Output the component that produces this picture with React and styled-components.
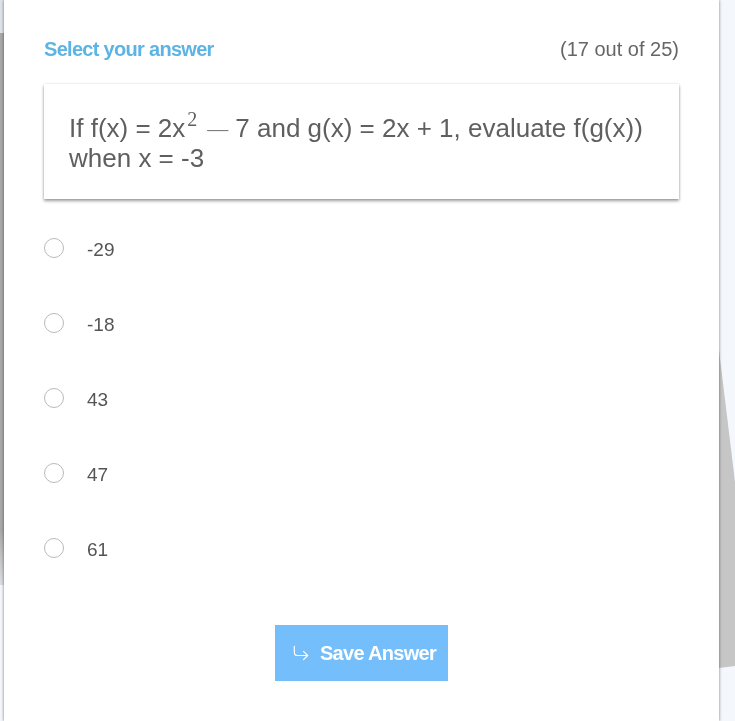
import styled, { createGlobalStyle } from "styled-components";
import { CornerDownRight } from "lucide-react";

const GlobalStyle = createGlobalStyle`
  html, body {
    margin: 0;
    padding: 0;
    background: #f4f7fb;
  }
  body {
    font-family: "Liberation Sans", Arial, sans-serif;
  }
`;

const Backdrop = styled.svg`
  position: fixed;
  top: 0;
  left: 0;
  width: 735px;
  height: 721px;
  z-index: 0;
`;

const Page = styled.div`
  position: relative;
  z-index: 1;
  box-sizing: border-box;
  margin-left: 4px;
  width: 715px;
  min-height: 100vh;
  padding: 38px 40px 40px;
  background: #fff;
  box-shadow: 0 0 3px rgba(0, 0, 0, 0.5);
`;

const Header = styled.div`
  display: flex;
  justify-content: space-between;
  align-items: baseline;
  line-height: 22px;
`;

const Title = styled.h2`
  margin: 0;
  font-size: 20px;
  font-weight: bold;
  letter-spacing: -0.7px;
  color: #5cb4e4;
`;

const Counter = styled.span`
  font-size: 20px;
  color: #666;
`;

const QuestionCard = styled.div`
  margin-top: 24px;
  padding: 29px 25px 26px;
  font-size: 26px;
  line-height: 30px;
  color: #5f5f5f;
  background: #fff;
  box-shadow: 0 2px 3px rgba(0, 0, 0, 0.38), 0 0 2px rgba(0, 0, 0, 0.12);
`;

const Sup = styled.span`
  font-family: "Liberation Serif", "Times New Roman", serif;
  font-size: 20px;
  line-height: 0;
  vertical-align: 11px;
  margin-left: 2px;
`;

const Minus = styled.span`
  font-family: "Liberation Serif", "Times New Roman", serif;
  font-size: 21px;
  line-height: 0;
  vertical-align: 1px;
  margin: 0 7px 0 10px;
  color: #777;
`;

const Options = styled.div`
  margin-top: 11px;
`;

const Option = styled.label`
  display: flex;
  align-items: center;
  height: 75px;
  cursor: pointer;
`;

const Radio = styled.input`
  appearance: none;
  box-sizing: border-box;
  width: 20px;
  height: 20px;
  margin: 0 23px 0 0;
  border: 1px solid #bababa;
  border-radius: 50%;
  background: #fff;
`;

const OptionText = styled.span`
  font-size: 19px;
  color: #555;
  padding-top: 4px;
`;

const Actions = styled.div`
  display: flex;
  justify-content: center;
  margin-top: 40px;
`;

const SaveButton = styled.button`
  display: flex;
  align-items: center;
  justify-content: center;
  gap: 9px;
  width: 173px;
  height: 56px;
  padding: 0 0 0 4px;
  border: none;
  background: #73befb;
  color: #fff;
  font-family: "Liberation Sans", Arial, sans-serif;
  font-size: 20px;
  font-weight: bold;
  letter-spacing: -0.7px;
  cursor: pointer;
`;

const answers = ["-29", "-18", "43", "47", "61"];

const App = () => {
  return (
    <>
      <GlobalStyle />
      <Backdrop viewBox="0 0 735 721">
        <defs>
          <linearGradient id="leftFade" x1="0" y1="0" x2="0" y2="1">
            <stop offset="0" stopColor="#a9a9a9" />
            <stop offset="0.9" stopColor="#a9a9a9" />
            <stop offset="1" stopColor="#dcdfe3" />
          </linearGradient>
        </defs>
        <rect x="0" y="0" width="4" height="33" fill="#dfe3e8" />
        <rect x="0" y="33" width="4" height="552" fill="url(#leftFade)" />
        <polygon points="719,350 735,482 735,666 719,668" fill="#c6c6c6" />
      </Backdrop>
      <Page>
        <Header>
          <Title>Select your answer</Title>
          <Counter>(17 out of 25)</Counter>
        </Header>
        <QuestionCard>
          If f(x) = 2x<Sup>2</Sup>
          <Minus>—</Minus>7 and g(x) = 2x + 1, evaluate f(g(x)) when x = -3
        </QuestionCard>
        <Options>
          {answers.map((a) => (
            <Option key={a}>
              <Radio type="radio" name="answer" value={a} />
              <OptionText>{a}</OptionText>
            </Option>
          ))}
        </Options>
        <Actions>
          <SaveButton>
            <CornerDownRight size={20} strokeWidth={1.4} />
            Save Answer
          </SaveButton>
        </Actions>
      </Page>
    </>
  );
};

export default App;
